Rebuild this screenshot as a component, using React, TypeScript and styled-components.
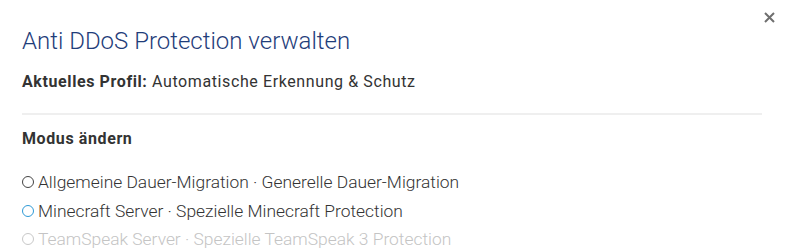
import React from "react";
import styled, { createGlobalStyle } from "styled-components";

const Global = createGlobalStyle`
  html, body { margin: 0; padding: 0; background: #fff; }
  body { font-family: Roboto, "Noto Sans", sans-serif; color: #333; }
`;

const Modal = styled.div`
  position: relative;
  width: 787px;
  height: 251px;
  box-sizing: border-box;
  padding: 25px 25px 0 22px;
  overflow: hidden;
`;

const Close = styled.button`
  position: absolute;
  top: 6px;
  right: 7px;
  width: 22px;
  height: 22px;
  border: 0;
  background: none;
  padding: 0;
  display: flex;
  align-items: center;
  justify-content: center;
  cursor: pointer;
`;

const Title = styled.h2`
  margin: 0;
  font-size: 24px;
  font-weight: 300;
  line-height: 32px;
  color: #1f3d7a;
`;

const Profile = styled.p`
  margin: 14px 0 0;
  font-size: 16px;
  line-height: 22px;
  letter-spacing: 0.6px;
  strong { font-weight: 700; }
`;

const Divider = styled.hr`
  border: 0;
  border-top: 2px solid #efefef;
  margin: 20px 0 13px;
`;

const SectionTitle = styled.h3`
  margin: 0;
  font-size: 16px;
  font-weight: 700;
  letter-spacing: 0.6px;
  line-height: 22px;
`;

const Options = styled.div`
  margin-top: 18px;
  display: flex;
  flex-direction: column;
`;

const Option = styled.label<{ $disabled?: boolean }>`
  display: flex;
  align-items: center;
  gap: 4px;
  height: 28.5px;
  font-size: 17.4px;
  font-weight: 300;
  color: ${(p) => (p.$disabled ? "#c4c4c4" : "#333")};
`;

const Radio = styled.span<{ $color: string }>`
  width: 12px;
  height: 12px;
  box-sizing: border-box;
  border-radius: 50%;
  border: 1.5px solid ${(p) => p.$color};
  flex: none;
`;

const options = [
  { text: "Allgemeine Dauer-Migration · Generelle Dauer-Migration", color: "#444", disabled: false },
  { text: "Minecraft Server · Spezielle Minecraft Protection", color: "#2f9ad6", disabled: false },
  { text: "TeamSpeak Server · Spezielle TeamSpeak 3 Protection", color: "#c8c8c8", disabled: true },
];

export default function App() {
  return (
    <>
      <Global />
      <Modal>
        <Close aria-label="Schließen">
          <svg width="11" height="11" viewBox="0 0 11 11">
            <path d="M1 1L10 10M10 1L1 10" stroke="#6f6f6f" strokeWidth="2" />
          </svg>
        </Close>
        <Title>Anti DDoS Protection verwalten</Title>
        <Profile>
          <strong>Aktuelles Profil:</strong> Automatische Erkennung &amp; Schutz
        </Profile>
        <Divider />
        <SectionTitle>Modus ändern</SectionTitle>
        <Options>
          {options.map((o) => (
            <Option key={o.text} $disabled={o.disabled}>
              <Radio $color={o.color} />
              {o.text}
            </Option>
          ))}
        </Options>
      </Modal>
    </>
  );
}
